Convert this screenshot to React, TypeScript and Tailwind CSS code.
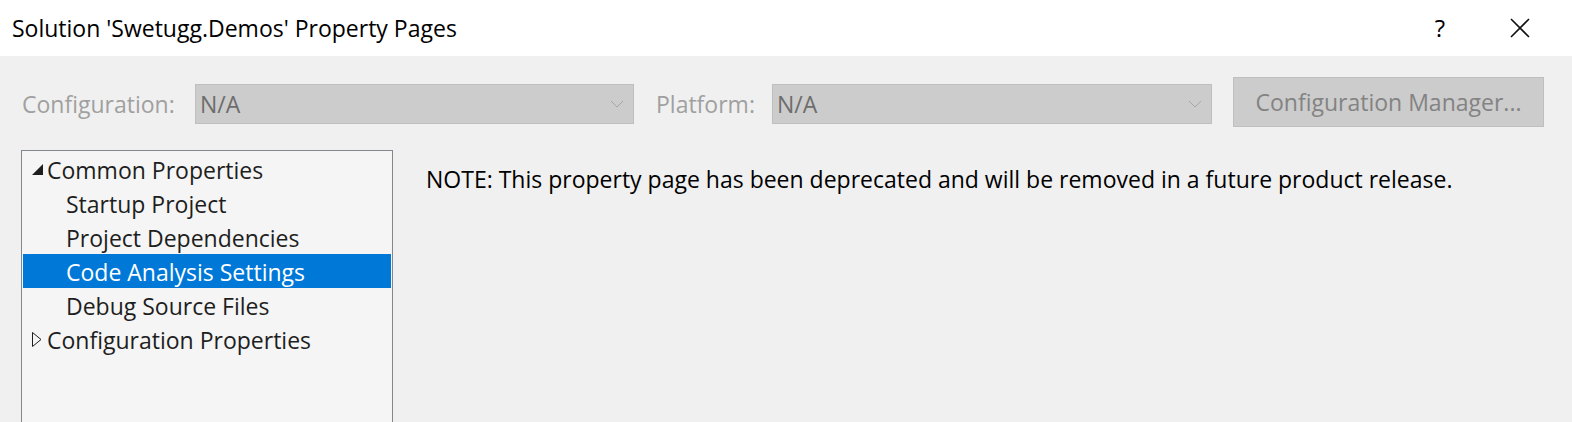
import React from 'react';

const font = { fontFamily: '"Open Sans", "Noto Sans", sans-serif' };

const Chevron: React.FC = () => (
  <svg width="14" height="8" viewBox="0 0 14 8" className="shrink-0">
    <path d="M1 1 L7 7 L13 1" fill="none" stroke="#a6a6a6" strokeWidth="1" />
  </svg>
);

const Combo: React.FC<{ width: string; value: string }> = ({ width, value }) => (
  <div className={`${width} h-[40px] mt-[7px] bg-[#cccccc] border border-[#bfbfbf] flex items-center justify-between pl-[4px] pr-[9px]`}>
    <span className="text-[#6d6d6d]">{value}</span>
    <Chevron />
  </div>
);

const TreeRow: React.FC<{ label: string; indent?: boolean; selected?: boolean; icon?: 'open' | 'closed' }> = ({
  label,
  indent,
  selected,
  icon,
}) => (
  <div
    className={`h-[34px] flex items-center ${selected ? 'bg-[#0078d7] text-white' : 'text-[#1e1e1e]'}`}
  >
    <div className="w-[24px] flex justify-center shrink-0 pl-[4px]">
      {icon === 'open' && (
        <svg width="11" height="11" viewBox="0 0 11 11">
          <polygon points="11,0 11,11 0,11" fill="#1e1e1e" />
        </svg>
      )}
      {icon === 'closed' && (
        <svg width="10" height="15" viewBox="0 0 10 15">
          <polygon points="0.5,0.5 9,7.5 0.5,14.5" fill="none" stroke="#1e1e1e" strokeWidth="1" />
        </svg>
      )}
    </div>
    <span className={`pt-[3px] ${indent ? 'pl-[19px]' : ''}`}>{label}</span>
  </div>
);

const App: React.FC = () => {
  return (
    <div className="w-[1572px] h-[422px] bg-[#f0f0f0] overflow-hidden text-[23px] leading-none" style={font}>
      {/* Title bar */}
      <div className="h-[56px] bg-white flex items-center justify-between pl-[12px]">
        <span className="text-black">Solution 'Swetugg.Demos' Property Pages</span>
        <div className="flex items-center h-full">
          <span className="w-[86px] text-center text-black text-[24px] pr-[6px]">?</span>
          <div className="w-[86px] flex justify-center pr-[18px]">
            <svg width="20" height="20" viewBox="0 0 20 20">
              <path d="M1 1 L19 19 M19 1 L1 19" stroke="#111" strokeWidth="1.6" />
            </svg>
          </div>
        </div>
      </div>

      {/* Configuration row */}
      <div className="flex items-start h-[50px] mt-[21px] pl-[22px]">
        <div className="w-[173px] h-[40px] mt-[7px] flex items-center text-[#a0a0a0]">Configuration:</div>
        <Combo width="w-[439px]" value="N/A" />
        <div className="w-[138px] h-[40px] mt-[7px] flex items-center pl-[22px] text-[#a0a0a0]">Platform:</div>
        <Combo width="w-[440px]" value="N/A" />
        <div className="ml-[21px] w-[311px] h-[50px] bg-[#cccccc] border border-[#bfbfbf] flex items-center justify-center text-[#838383]">
          Configuration Manager...
        </div>
      </div>

      {/* Body */}
      <div className="flex items-start mt-[23px] pl-[21px]">
        <div className="w-[372px] h-[300px] bg-[#f5f5f5] border border-[#828790] pt-[1px] px-[1px]">
          <TreeRow label="Common Properties" icon="open" />
          <TreeRow label="Startup Project" indent />
          <TreeRow label="Project Dependencies" indent />
          <TreeRow label="Code Analysis Settings" indent selected />
          <TreeRow label="Debug Source Files" indent />
          <TreeRow label="Configuration Properties" icon="closed" />
        </div>
        <div className="ml-[33px] mt-[18px] text-black">
          NOTE: This property page has been deprecated and will be removed in a future product release.
        </div>
      </div>
    </div>
  );
};

export default App;
